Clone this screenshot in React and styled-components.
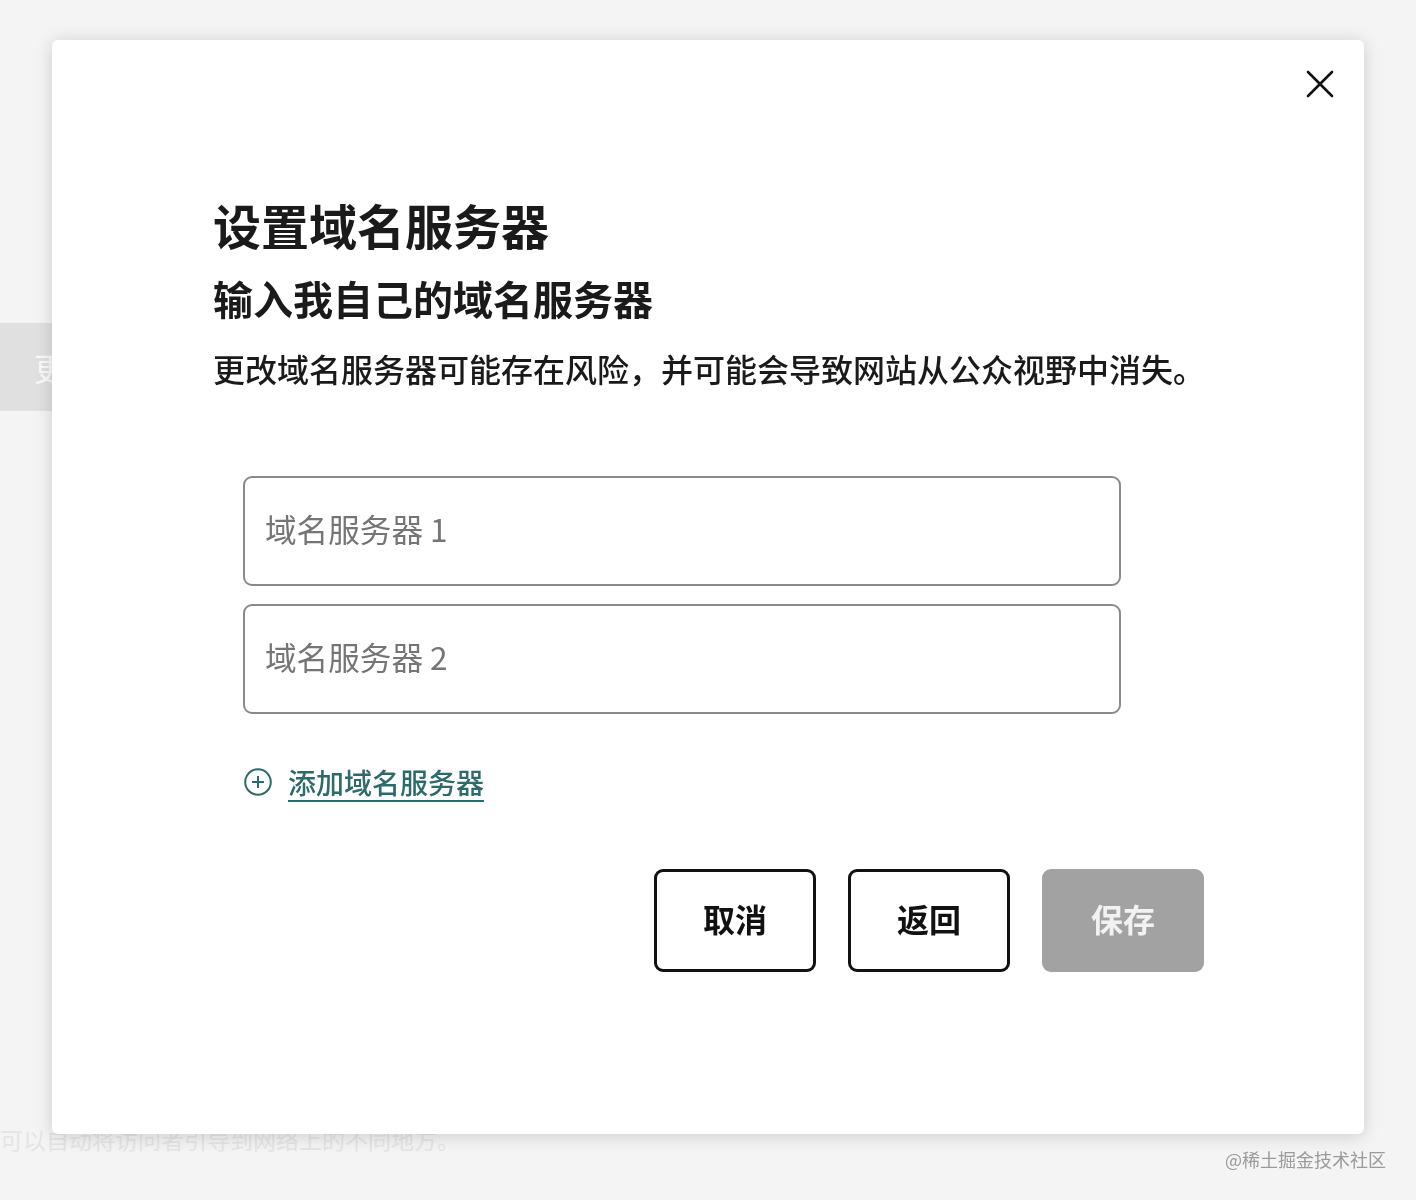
import React from "react";
import styled, { createGlobalStyle } from "styled-components";

const GlobalStyle = createGlobalStyle`
  html, body {
    margin: 0;
    padding: 0;
    background: #f4f4f4;
    font-family: "Noto Sans CJK SC", "Noto Sans", sans-serif;
    overflow: hidden;
  }
`;

export default function App() {
  return (
    <>
      <GlobalStyle />
      <Page>
        <GhostBar>更改</GhostBar>
        <GhostText>可以自动将访问者引导到网络上的不同地方。</GhostText>
      </Page>

      <Modal>
        <CloseButton aria-label="关闭">
          <svg width="40" height="40" viewBox="0 0 40 40">
            <path d="M8 8 L32 32 M32 8 L8 32" stroke="#111" strokeWidth="2.6" strokeLinecap="round" />
          </svg>
        </CloseButton>

        <Title>设置域名服务器</Title>
        <Subtitle>输入我自己的域名服务器</Subtitle>
        <Note>更改域名服务器可能存在风险，并可能会导致网站从公众视野中消失。</Note>

        <Fields>
          <Field placeholder="域名服务器 1" />
          <Field placeholder="域名服务器 2" />
          <AddLink href="#">
            <svg width="30" height="30" viewBox="0 0 30 30">
              <circle cx="15" cy="15" r="12.8" fill="none" stroke="#2d6a6a" strokeWidth="2" />
              <path d="M15 9 V21 M9 15 H21" stroke="#2d6a6a" strokeWidth="2" />
            </svg>
            <span>添加域名服务器</span>
          </AddLink>
        </Fields>

        <Actions>
          <Button>取消</Button>
          <Button>返回</Button>
          <Button $primary disabled>保存</Button>
        </Actions>
      </Modal>

      <Watermark>@稀土掘金技术社区</Watermark>
    </>
  );
}

const Page = styled.div`
  height: 1200px;
  padding-top: 323px;
  box-sizing: border-box;
`;

const GhostBar = styled.div`
  width: 120px;
  height: 88px;
  overflow: hidden;
  white-space: nowrap;
  background: #e0e0e0;
  color: #fafafa;
  font-size: 32px;
  line-height: 88px;
  padding-left: 34px;
  box-sizing: border-box;
`;

const GhostText = styled.div`
  margin-top: 710px;
  font-size: 23px;
  line-height: 36px;
  color: #e4e4e4;
  white-space: nowrap;
`;

const Modal = styled.div`
  position: fixed;
  top: 40px;
  left: 52px;
  width: 1312px;
  height: 1094px;
  box-sizing: border-box;
  background: #fff;
  border-radius: 6px;
  box-shadow: 0 2px 18px rgba(0, 0, 0, 0.16);
  padding: 156px 160px 0 161px;
  display: flex;
  flex-direction: column;
`;

const CloseButton = styled.button`
  position: absolute;
  top: 24px;
  right: 24px;
  width: 40px;
  height: 40px;
  padding: 0;
  border: none;
  background: none;
  cursor: pointer;
  display: flex;
`;

const Title = styled.h1`
  margin: 0;
  font-size: 48px;
  line-height: 56px;
  font-weight: 700;
  color: #1a1a1a;
`;

const Subtitle = styled.h2`
  margin: 22px 0 0;
  font-size: 40px;
  line-height: 48px;
  font-weight: 700;
  color: #1a1a1a;
`;

const Note = styled.p`
  margin: 24px 0 0;
  font-size: 32px;
  line-height: 44px;
  font-weight: 500;
  color: #1a1a1a;
  white-space: nowrap;
`;

const Fields = styled.div`
  margin: 86px 0 0 30px;
  width: 878px;
  display: flex;
  flex-direction: column;
  gap: 18px;
`;

const Field = styled.input`
  height: 110px;
  box-sizing: border-box;
  border: 2px solid #8a8a8a;
  border-radius: 9px;
  padding: 0 20px 7px;
  font-family: inherit;
  font-size: 31.6px;
  color: #222;
  outline: none;

  &::placeholder {
    color: #757575;
  }
`;

const AddLink = styled.a`
  margin-top: 30px;
  display: flex;
  align-items: center;
  gap: 15px;
  height: 40px;
  color: #2d6a6a;
  font-size: 28px;
  font-weight: 500;
  text-decoration: none;

  span {
    text-decoration: underline;
    text-decoration-thickness: 2px;
    text-underline-offset: 6px;
  }
`;

const Actions = styled.div`
  margin-top: 67px;
  display: flex;
  justify-content: flex-end;
  gap: 32px;
`;

const Button = styled.button`
  width: 162px;
  height: 103px;
  box-sizing: border-box;
  border-radius: 9px;
  border: ${(p) => (p.$primary ? "none" : "3px solid #111")};
  background: ${(p) => (p.$primary ? "#a2a2a2" : "#fff")};
  color: ${(p) => (p.$primary ? "#f2f2f2" : "#111")};
  font-family: inherit;
  font-size: 32px;
  font-weight: 700;
  padding: 0 0 5px;
  cursor: pointer;
`;

const Watermark = styled.div`
  position: fixed;
  right: 30px;
  bottom: 30px;
  font-size: 18px;
  line-height: 22px;
  color: #9a9a9a;
`;
